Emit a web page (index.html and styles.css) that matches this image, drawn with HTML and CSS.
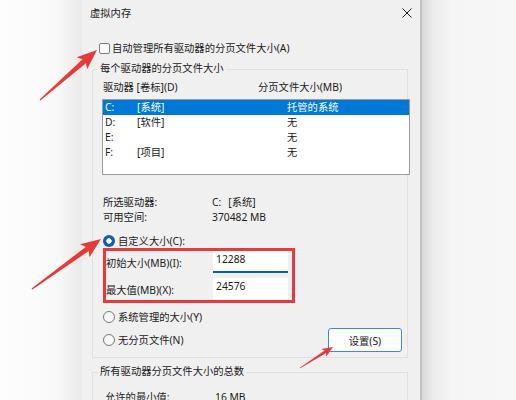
FILE: index.html
```html
<!DOCTYPE html>
<html lang="zh-CN">
<head>
    <meta charset="UTF-8">
    <meta name="viewport" content="width=device-width, initial-scale=1.0">
    <title>虚拟内存</title>
    <link rel="stylesheet" href="styles.css">
</head>
<body>
    <div class="screen">
        <div class="backdrop-left"></div>

        <div class="dialog">
            <div class="titlebar">
                <span>虚拟内存</span>
                <svg class="close" width="10" height="10" viewBox="0 0 10 10">
                    <path d="M0.5 0.5 L9.5 9.5 M9.5 0.5 L0.5 9.5" stroke="#1c1c1c" stroke-width="1" fill="none"/>
                </svg>
            </div>

            <div class="check-row">
                <span class="checkbox"></span>
                <span>自动管理所有驱动器的分页文件大小(A)</span>
            </div>

            <div class="group">
                <div class="group-title">每个驱动器的分页文件大小</div>

                <div class="list-head">
                    <span class="head-drive">驱动器 [卷标](D)</span>
                    <span>分页文件大小(MB)</span>
                </div>

                <div class="drive-list">
                    <div class="drive-row selected"><span>C:</span><span>[系统]</span><span>托管的系统</span></div>
                    <div class="drive-row"><span>D:</span><span>[软件]</span><span>无</span></div>
                    <div class="drive-row"><span>E:</span><span></span><span>无</span></div>
                    <div class="drive-row"><span>F:</span><span>[项目]</span><span>无</span></div>
                </div>

                <div class="info">
                    <span>所选驱动器:</span><span>C:<span class="label-gap">[系统]</span></span>
                    <span>可用空间:</span><span>370482 MB</span>
                </div>

                <div class="radio-row custom">
                    <span class="radio checked"></span>
                    <span>自定义大小(C):</span>
                </div>

                <div class="size-box">
                    <div class="size-row">
                        <span class="size-label">初始大小(MB)(I):</span>
                        <input class="textbox focused" type="text" value="12288">
                    </div>
                    <div class="size-row">
                        <span class="size-label">最大值(MB)(X):</span>
                        <input class="textbox" type="text" value="24576">
                    </div>
                </div>

                <div class="radio-row option-system">
                    <span class="radio"></span>
                    <span>系统管理的大小(Y)</span>
                </div>

                <div class="option-last">
                    <div class="radio-row">
                        <span class="radio"></span>
                        <span>无分页文件(N)</span>
                    </div>
                    <button class="btn" type="button">设置(S)</button>
                </div>
            </div>

            <div class="group group-total">
                <div class="group-title">所有驱动器分页文件大小的总数</div>
                <div class="info total">
                    <span>允许的最小值:</span><span>16 MB</span>
                </div>
            </div>
        </div>

        <div class="backdrop-right"></div>

        <!-- red pointer arrows drawn over the dialog -->
        <svg class="marks" width="516" height="400" viewBox="0 0 516 400">
            <polygon fill="#e8393a" points="40.4,100.5 85.9,63.2 87.2,69.2 97,50 76.7,57.2 82.5,59.2 39.6,99.5"/>
            <polygon fill="#e8393a" points="32.4,289.5 88.7,251.1 89.5,257.2 101,239 80.1,244.3 85.7,246.9 31.6,288.5"/>
            <polygon fill="#e8393a" points="300.2,368.3 326.2,353.0 326.1,356.7 333,347 321.3,349.1 324.6,350.6 299.8,367.7"/>
        </svg>
    </div>
</body>
</html>
```

FILE: styles.css
```css
* {
    margin: 0;
    padding: 0;
    box-sizing: border-box;
}

body {
    width: 516px;
    height: 400px;
    overflow: hidden;
    background: #f7f7f7;
    font-family: "Noto Sans", "Noto Sans CJK SC", sans-serif;
    font-size: 10.3px;
    color: #1a1a1a;
}

.screen {
    position: relative;
    display: flex;
    height: 400px;
    overflow: hidden;
}

.backdrop-left {
    width: 82px;
    background: linear-gradient(to right, #fdfdfd 0%, #f9f9f9 70%, #e9e9e9 100%);
}

.backdrop-right {
    flex: 1;
    background: linear-gradient(to right, #d9d9d9 0, #ececec 12px, #f5f5f5 30px, #f7f7f7 100%);
}

/* plain block flow inside, so rows keep their heights when the dialog runs past the bottom */
.dialog {
    width: 340px;
    overflow: hidden;
    background: #f0f0f0;
    border-right: 2px solid #c2c2c2;
}

.titlebar {
    height: 26px;
    display: flex;
    align-items: center;
    justify-content: space-between;
    padding: 0 8px;
    line-height: 14px;
}

.check-row {
    display: flex;
    align-items: center;
    gap: 2px;
    height: 14px;
    line-height: 14px;
    margin-top: 15px;
    padding-left: 17px;
}

.checkbox {
    width: 11px;
    height: 11px;
    border: 1px solid #7d7d7d;
    border-radius: 2px;
    background: #f9f9f9;
}

/* group boxes */
.group {
    margin: 14px 12px 0 10px;
    border: 1px solid #e0e0e0;
    padding-bottom: 5px;
}

.group-title {
    width: fit-content;
    height: 14px;
    line-height: 14px;
    margin: -9px 0 0 5px;
    padding: 0 2px;
    background: #f0f0f0;
}

.list-head {
    display: flex;
    height: 14px;
    line-height: 14px;
    margin-top: 5px;
    padding-left: 10px;
}

.head-drive {
    width: 155px;
}

.drive-list {
    height: 76px;
    margin: 5px -3px 0 9px;
    border: 1px solid #9c9c9c;
    background: #fff;
}

.drive-row {
    display: grid;
    grid-template-columns: 32px 150px 1fr;
    height: 15px;
    line-height: 15px;
    padding-left: 2px;
}

.drive-row.selected {
    background: #0078d7;
    color: #fff;
}

.info {
    display: grid;
    grid-template-columns: 109px 1fr;
    margin-top: 20px;
    padding-left: 10px;
    line-height: 15px;
}

.label-gap {
    margin-left: 7px;
}

.info.total {
    grid-template-columns: 110px 1fr;
    margin-top: 12px;
    padding-left: 12px;
    padding-bottom: 20px;
}

/* radio buttons */
.radio-row {
    display: flex;
    align-items: center;
    gap: 3px;
    height: 14px;
    line-height: 14px;
    margin-left: 10px;
}

.radio-row.custom {
    margin-top: 9px;
}

.radio {
    flex: none;
    width: 12px;
    height: 12px;
    border: 1px solid #777;
    border-radius: 50%;
    background: #f7f7f7;
}

.radio.checked {
    border: none;
    background: radial-gradient(circle, #fff 0 2.4px, #0f5fb5 3px);
}

.size-box {
    display: flex;
    flex-direction: column;
    gap: 5px;
    width: 192px;
    height: 55px;
    margin-left: 10px;
    border: 3px solid #e63a3b;
}

.size-row {
    display: flex;
    align-items: center;
    height: 22px;
}

.size-label {
    width: 107px;
}

.textbox {
    width: 75px;
    height: 22px;
    padding: 0 3px 6px;
    border: none;
    outline: none;
    background: #fff;
    font: inherit;
    color: inherit;
}

.textbox.focused {
    padding-bottom: 4px;
    border-bottom: 2px solid #005fb8;
}

.option-system {
    margin-top: 7px;
}

.option-last {
    display: flex;
    align-items: center;
    justify-content: space-between;
    margin: 4px 5px 0 0;
}

.btn {
    width: 74px;
    height: 24px;
    border: 1px solid #4a86d4;
    border-radius: 3px;
    background: #fdfdfd;
    font: inherit;
    color: inherit;
}

.marks {
    position: absolute;
    left: 0;
    top: 0;
    pointer-events: none;
}
```
